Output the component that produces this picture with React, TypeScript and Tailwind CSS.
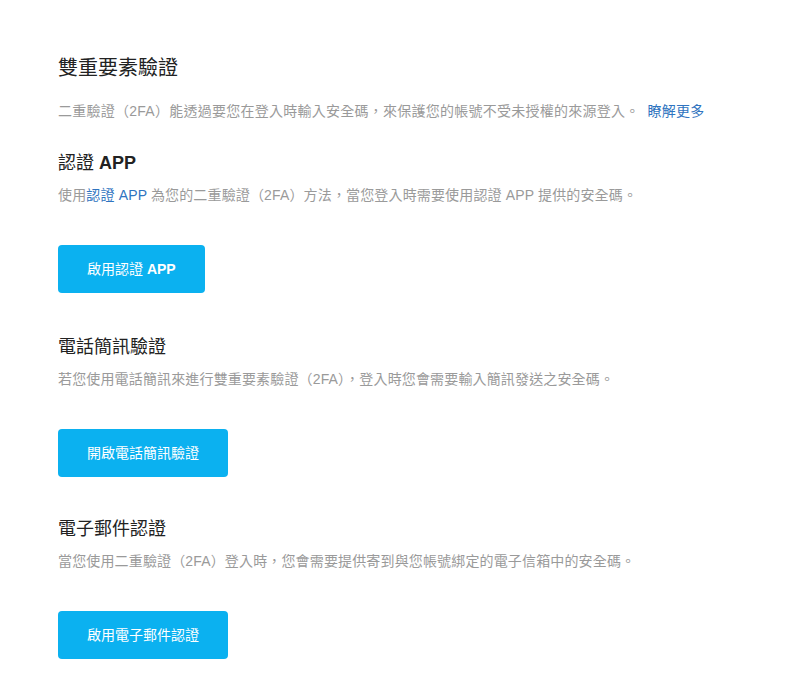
import React from 'react';

const font = { fontFamily: '"Liberation Sans", "Noto Sans CJK TC", sans-serif' };

interface Section {
  title: React.ReactNode;
  desc: React.ReactNode;
  button: React.ReactNode;
  gap: string;
}

const sections: Section[] = [
  {
    title: (
      <>
        認證 <span className="font-bold">APP</span>
      </>
    ),
    desc: (
      <>
        使用<span className="text-[#2f74c0]">認證 APP</span> 為您的二重驗證（2FA）方法，當您登入時需要使用認證 APP 提供的安全碼。
      </>
    ),
    button: (
      <>
        啟用認證 <span className="font-bold">APP</span>
      </>
    ),
    gap: 'mt-[30px]',
  },
  {
    title: '電話簡訊驗證',
    desc: '若您使用電話簡訊來進行雙重要素驗證（2FA），登入時您會需要輸入簡訊發送之安全碼。',
    button: '開啟電話簡訊驗證',
    gap: 'mt-[42px]',
  },
  {
    title: '電子郵件認證',
    desc: '當您使用二重驗證（2FA）登入時，您會需要提供寄到與您帳號綁定的電子信箱中的安全碼。',
    button: '啟用電子郵件認證',
    gap: 'mt-[40px]',
  },
];

export default function App() {
  return (
    <div className="min-h-screen bg-white px-[58px] pt-[54px]" style={font}>
      <h1 className="text-[20px] leading-[28px] text-[#222]">雙重要素驗證</h1>
      <p className="mt-[19px] text-[14px] leading-[20px] tracking-[0.25px] text-[#9a9a9a]">
        二重驗證（2FA）能透過要您在登入時輸入安全碼，來保護您的帳號不受未授權的來源登入。 <span className="ml-1 text-[#2f74c0]">瞭解更多</span>
      </p>

      {sections.map((s, i) => (
        <div key={i} className={s.gap}>
          <h2 className="text-[18px] leading-[24px] text-[#222]">{s.title}</h2>
          <p className="mt-[10px] text-[14px] leading-[20px] tracking-[0.15px] text-[#9a9a9a]">{s.desc}</p>
          <button className="mt-[40px] h-[48px] rounded-[4px] bg-[#0bb1f0] px-[29px] text-[14px] text-white">
            {s.button}
          </button>
        </div>
      ))}
    </div>
  );
}
